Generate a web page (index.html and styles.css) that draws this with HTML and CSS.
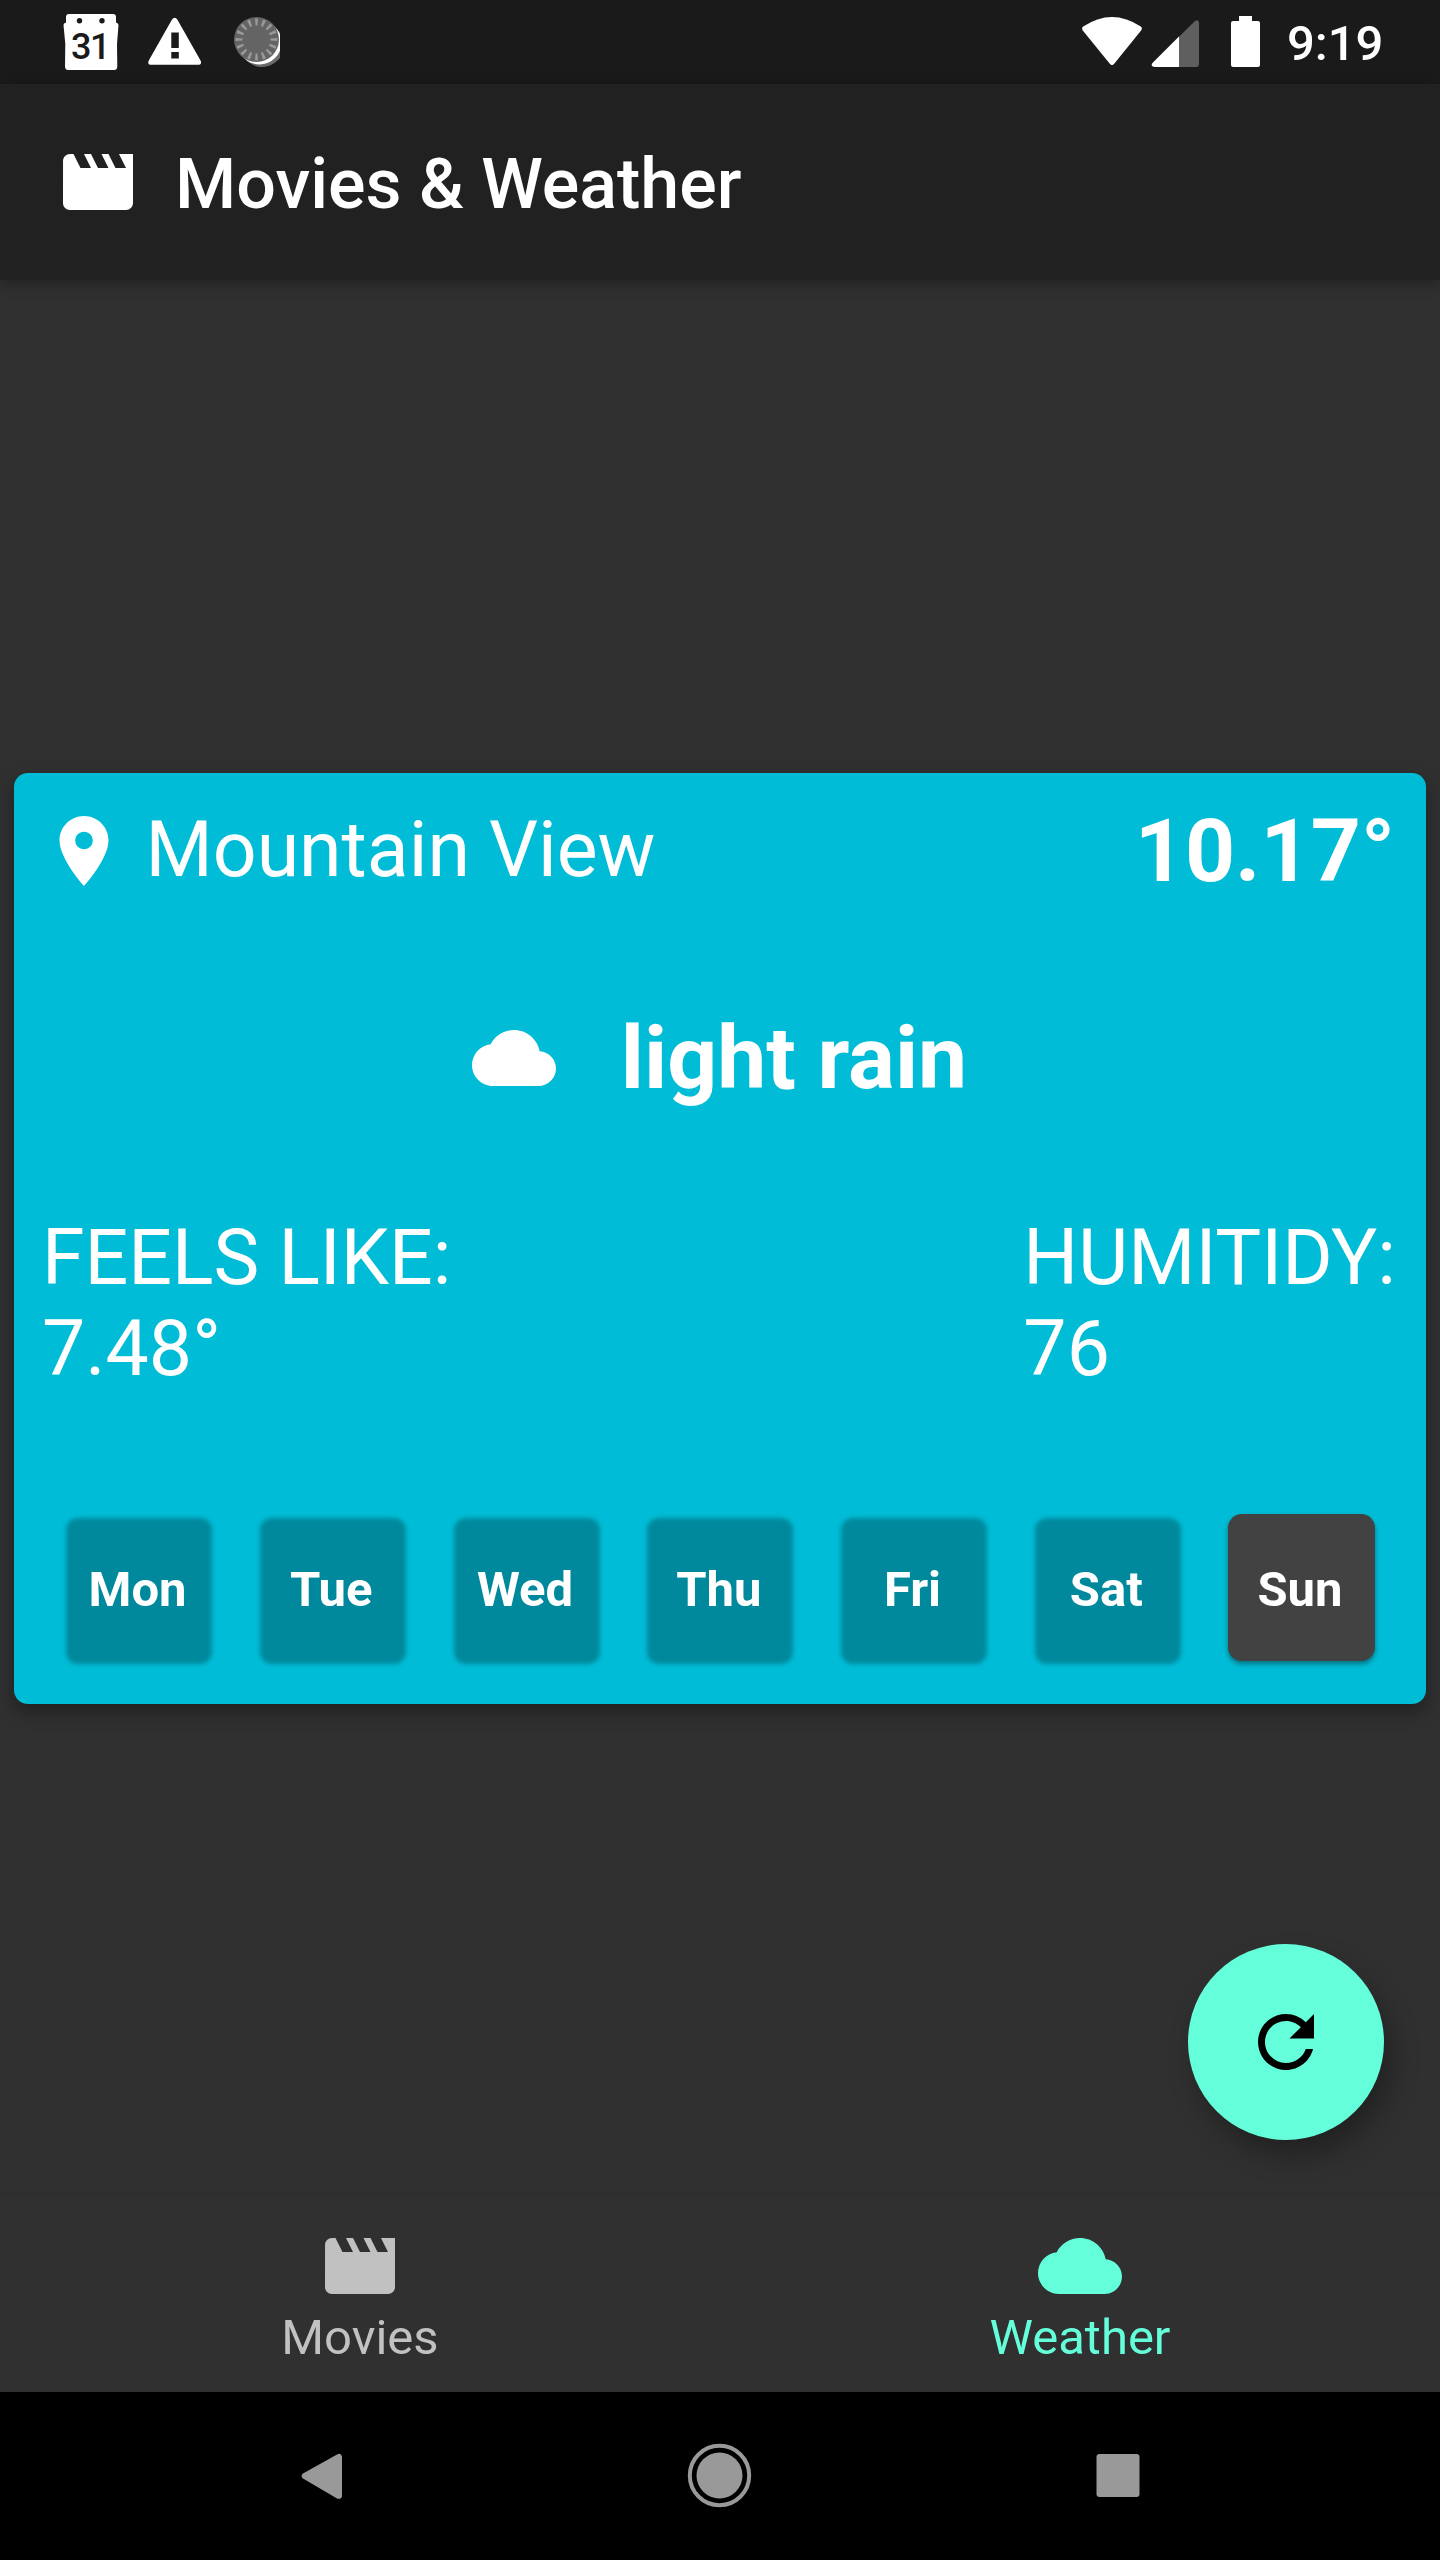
FILE: index.html
```html
<!DOCTYPE html>
<html lang="en">
<head>
<meta charset="utf-8">
<title>Movies &amp; Weather</title>
<link rel="stylesheet" href="styles.css">
</head>
<body>
<div class="screen">
  <div class="status-bar">
    <svg class="status-left" viewBox="0 0 240 84" width="240" height="84">
      <path fill="#fff" d="M29 14h44q3 0 3 3v5.500q2.500 .5 2.500 2.500l-1.500 19 .3 22q0 4-3 4H28q-3 0-3-4l.3-22L23.500 25q0-2 2.500-2.500V17q0-3 3-3z"/>
      <circle cx="39.500" cy="20.700" r="2.700" fill="#1a1a1a"/><circle cx="62" cy="20.700" r="2.700" fill="#1a1a1a"/>
      <text class="calendar-day" x="50" y="59" text-anchor="middle">31</text>
      <path fill="#fff" d="M132 19.500q2.700-3.600 5.300 0L160.800 61q1 3.700-2 3.700H110.500q-3 0-2-3.700zM131.300 32.500v15.500h7.500V32.500zM131.300 52v6.500h7.500V52z" fill-rule="evenodd"/>
      <circle cx="222" cy="45" r="22" fill="#6b6b6b"/>
      <circle cx="219.500" cy="42.500" r="22" fill="#fff"/>
      <circle cx="216.500" cy="39.500" r="22.500" fill="#646464"/>
      <circle class="spinner-ticks" cx="216.500" cy="39.500" r="17.500" pathLength="160"/>
    </svg>
    <svg class="status-right" viewBox="0 0 190 84" width="190" height="84">
      <path fill="#fff" d="M3.200 26.500Q32 7.500 60.800 26.500q2 1.500 .3 4L34 64q-2 2.300-4 0L2.800 30.500q-1.600-2.500 .4-4z"/>
      <path fill="#5f5f5f" d="M72.500 63 115 21q2.500-2 4 1V64q0 3-3 3H75q-5-.5-2.500-4z"/>
      <path fill="#fff" d="M72.500 63 99 36.500V67H75q-5-.5-2.500-4z"/>
      <path fill="#fff" d="M159 16h13v5h6q2 0 2 2v42q0 2-2 2h-25q-2 0-2-2V23q0-2 2-2h6z"/>
    </svg>
    <span class="clock">9:19</span>
  </div>

  <header class="app-bar">
    <svg class="icon" viewBox="0 0 24 24"><path d="M18 4l2 4h-3l-2-4h-2l2 4h-3l-2-4H8l2 4H7L5 4H4c-1.100 0-1.990.9-1.990 2L2 18c0 1.100.9 2 2 2h16c1.100 0 2-.9 2-2V4h-4z"/></svg>
    <h1 class="title">Movies &amp; Weather</h1>
  </header>

  <main class="content">
    <section class="card">
      <div class="place-row">
        <div class="place">
          <svg class="icon" viewBox="0 0 24 24"><path d="M12 2C8.130 2 5 5.130 5 9c0 5.250 7 13 7 13s7-7.750 7-13c0-3.870-3.130-7-7-7zm0 9.500c-1.380 0-2.500-1.120-2.500-2.500s1.120-2.500 2.500-2.500 2.500 1.120 2.500 2.500-1.120 2.500-2.500 2.500z"/></svg>
          <span class="place-name">Mountain View</span>
        </div>
        <span class="temperature">10.17°</span>
      </div>
      <div class="condition">
        <svg class="icon" viewBox="0 0 24 24"><path d="M19.350 10.040C18.670 6.590 15.640 4 12 4 9.110 4 6.600 5.640 5.350 8.040 2.340 8.360 0 10.910 0 14c0 3.310 2.690 6 6 6h13c2.760 0 5-2.240 5-5 0-2.640-2.050-4.780-4.650-4.960z"/></svg>
        <span class="condition-name">light rain</span>
      </div>
      <div class="details">
        <div class="detail feels">FEELS LIKE:<br>7.48°</div>
        <div class="detail humidity">HUMITIDY:<br>76</div>
      </div>
      <div class="days">
        <div class="day">Mon</div>
        <div class="day">Tue</div>
        <div class="day">Wed</div>
        <div class="day">Thu</div>
        <div class="day">Fri</div>
        <div class="day">Sat</div>
        <div class="day selected">Sun</div>
      </div>
    </section>
    <div class="fab">
      <svg class="icon" viewBox="0 0 24 24"><path d="M17.650 6.350C16.200 4.900 14.210 4 12 4c-4.420 0-7.990 3.580-7.990 8s3.570 8 7.990 8c3.730 0 6.840-2.550 7.730-6h-2.080c-.82 2.330-3.040 4-5.650 4-3.310 0-6-2.690-6-6s2.690-6 6-6c1.660 0 3.140.69 4.220 1.780L13 11h7V4l-2.350 2.350z"/></svg>
    </div>
  </main>

  <nav class="tabs">
    <div class="tab">
      <svg class="icon" viewBox="0 0 24 24"><path d="M18 4l2 4h-3l-2-4h-2l2 4h-3l-2-4H8l2 4H7L5 4H4c-1.100 0-1.990.9-1.990 2L2 18c0 1.100.9 2 2 2h16c1.100 0 2-.9 2-2V4h-4z"/></svg>
      <span>Movies</span>
    </div>
    <div class="tab active">
      <svg class="icon" viewBox="0 0 24 24"><path d="M19.350 10.040C18.670 6.590 15.640 4 12 4 9.110 4 6.600 5.640 5.350 8.040 2.340 8.360 0 10.910 0 14c0 3.310 2.690 6 6 6h13c2.760 0 5-2.240 5-5 0-2.640-2.050-4.780-4.650-4.960z"/></svg>
      <span>Weather</span>
    </div>
  </nav>

  <div class="system-nav">
    <svg viewBox="0 0 70 70"><path d="M16 32.500q-3 2.500 0 5L50 57.500q4 1.500 5-2V15.500q-1-4-5-2z"/></svg>
    <svg viewBox="0 0 70 70"><circle cx="34.500" cy="34.500" r="23"/><circle class="ring" cx="34.500" cy="34.500" r="29.700"/></svg>
    <svg viewBox="0 0 70 70"><rect x="13.500" y="13" width="43" height="43" rx="3"/></svg>
  </div>
</div>
</body>
</html>
```
FILE: styles.css
```css
body {
  margin: 0;
  background: #303030;
  color: #fff;
  font-family: Roboto, "Liberation Sans", sans-serif;
}

.screen {
  display: flex;
  flex-direction: column;
  width: 1440px;
  height: 2560px;
  overflow: hidden;
}

svg {
  display: block;
  flex: none;
}

.icon {
  width: 84px;
  height: 84px;
  fill: currentColor;
}

.status-bar {
  display: flex;
  height: 84px;
  padding-left: 40px;
  box-sizing: border-box;
  background: #1a1a1a;
}

.status-right {
  margin-left: 800px;
}

.calendar-day {
  font-size: 36px;
  font-weight: 500;
  letter-spacing: -1.500px;
  fill: #1a1a1a;
}

.spinner-ticks {
  fill: none;
  stroke: #999;
  stroke-width: 7;
  stroke-dasharray: 3.700 6.300;
  stroke-dashoffset: 1.850;
}

.clock {
  margin-left: 17px;
  font-size: 49px;
  font-weight: 500;
  line-height: 88px;
}

.app-bar {
  position: relative;
  display: flex;
  align-items: center;
  gap: 35px;
  height: 196px;
  padding: 0 56px;
  box-sizing: border-box;
  background: #212121;
  box-shadow: 0 4px 14px rgba(0, 0, 0, 0.3);
}

.title {
  margin: 4px 0 0;
  font-size: 70px;
  font-weight: 500;
}

.content {
  position: relative;
  flex: 1;
  padding: 492.500px 14px 0;
}

.card {
  display: flex;
  flex-direction: column;
  height: 931px;
  border-radius: 14px;
  background: #00bcd6;
  box-shadow: 0 8px 18px rgba(0, 0, 0, 0.35);
}

.place-row {
  display: flex;
  align-items: center;
  justify-content: space-between;
  height: 156px;
  padding: 0 31px 0 28px;
}

.place {
  display: flex;
  align-items: center;
  gap: 19.500px;
}

.place-name {
  margin-bottom: 2px;
  font-size: 77px;
}

.temperature {
  font-size: 87.500px;
  font-weight: 700;
}

.condition {
  display: flex;
  align-items: center;
  justify-content: center;
  gap: 65px;
  height: 258px;
  padding-right: 1px;
}

.condition-name {
  font-size: 87.500px;
  font-weight: 700;
}

.details {
  display: flex;
  justify-content: space-between;
  height: 276px;
  padding: 26px 30px 0 28px;
  box-sizing: border-box;
}

.detail {
  font-size: 77px;
  line-height: 91px;
}

.days {
  display: flex;
  justify-content: space-between;
  padding: 51px 51.500px 0 51px;
}

.day {
  position: relative;
  display: flex;
  align-items: center;
  justify-content: center;
  width: 147px;
  height: 147px;
  padding: 4px 2px 0 0;
  box-sizing: border-box;
  font-size: 49px;
  font-weight: 700;
  isolation: isolate;
}

.day::before {
  content: "";
  position: absolute;
  inset: 4px 0 -3px 1px;
  z-index: -1;
  border-radius: 12px;
  background: #00899c;
  filter: blur(2px);
}

.day.selected {
  border-radius: 14px;
  background: #424242;
  box-shadow: 0 3px 5px rgba(0, 0, 0, 0.4);
}

.day.selected::before {
  display: none;
}

.fab {
  position: absolute;
  right: 56px;
  bottom: 56px;
  display: flex;
  align-items: center;
  justify-content: center;
  width: 196px;
  height: 196px;
  border-radius: 50%;
  background: #64ffda;
  color: #000;
  box-shadow: 8px 16px 28px rgba(0, 0, 0, 0.3);
}

.tabs {
  display: grid;
  grid-template-columns: 1fr 1fr;
  height: 196px;
  background: #303030;
  color: #c1c1c1;
  box-shadow: 0 -2px 6px rgba(0, 0, 0, 0.05);
}

.tab {
  display: flex;
  flex-direction: column;
  align-items: center;
  padding-top: 28px;
  font-size: 49px;
  line-height: 60px;
}

.tab.active {
  color: #64ffda;
}

.system-nav {
  display: flex;
  align-items: center;
  justify-content: center;
  gap: 328px;
  height: 168px;
  background: #000;
}

.system-nav svg {
  width: 70px;
  height: 70px;
  fill: #999;
}

.system-nav .ring {
  fill: none;
  stroke: #999;
  stroke-width: 4;
}
```
